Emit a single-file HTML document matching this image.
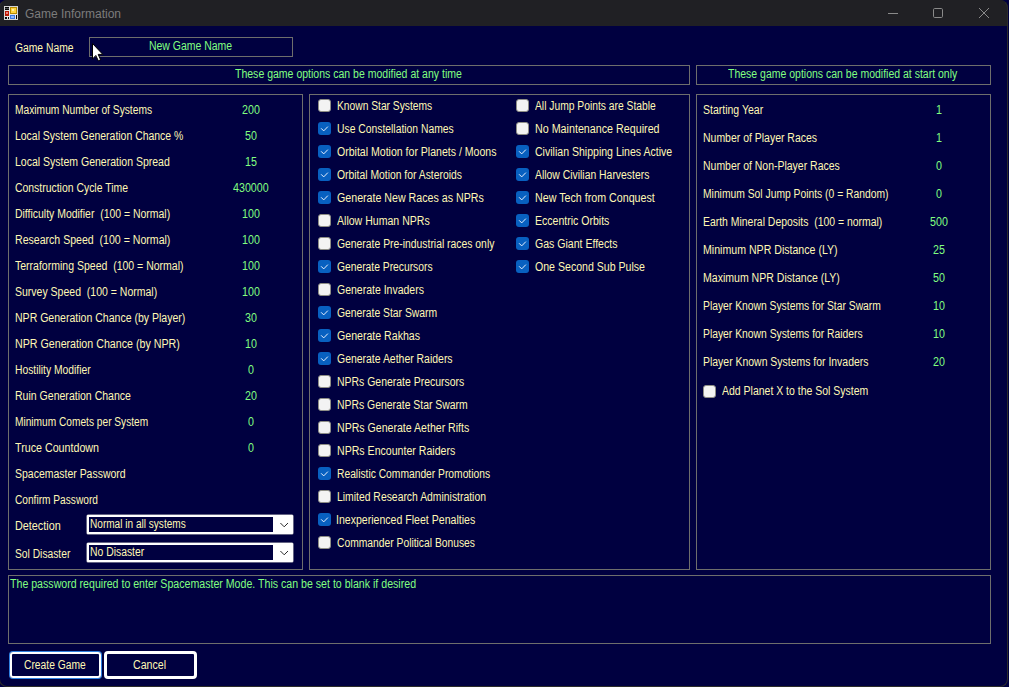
<!DOCTYPE html>
<html><head><meta charset="utf-8"><style>
*{margin:0;padding:0;box-sizing:border-box}
html,body{width:1009px;height:687px;overflow:hidden;background:#000040}
body{position:relative;font-family:"Liberation Sans",sans-serif;font-size:12px}
.t{position:absolute;white-space:pre;line-height:13px;height:13px;transform-origin:0 0}
.w{color:#FFF8B4}
.g{color:#80FF80}
.box{position:absolute;border:1px solid #6E6E6C}
.cb{position:absolute;width:13px;height:13px;border-radius:3px;background:#F3F3F3;border:1px solid #8E8E86}
.cb.on{background:#0860C0;border:none}
.cb svg{position:absolute;left:0;top:0}
#title{position:absolute;left:0;top:0;width:1009px;height:26px;background:#202024}
.combo{position:absolute;background:#fff;border-radius:1px;box-shadow:0 0 0 0.5px #c8c8c8}
.combo .in{position:absolute;left:2px;top:2px;width:184px;height:15px;background:#000040}
.btn{position:absolute;border:3px solid #fff;border-radius:4px}
</style></head><body>
<div id="title">
 <svg style="position:absolute;left:4px;top:6px" width="14" height="14" viewBox="0 0 14 14" shape-rendering="crispEdges">
  <rect x="0" y="0" width="14" height="14" fill="#D4D4D4"/><rect x="1" y="1" width="12" height="12" fill="#E6E6E6"/>
  <rect x="1" y="1" width="4" height="3" fill="#080808"/><rect x="1" y="2" width="4" height="1" fill="#505050"/>
  <rect x="1" y="5" width="4" height="5" fill="#B81800"/><rect x="2" y="6" width="2" height="2" fill="#F08080"/>
  <rect x="6" y="1" width="7" height="7" fill="#B88C00"/><rect x="7" y="2" width="5" height="5" fill="#FFD440"/><rect x="8" y="3" width="2" height="2" fill="#FFF0A0"/>
  <rect x="6" y="9" width="5" height="4" fill="#3C78E0"/><rect x="7" y="10" width="3" height="2" fill="#90B8FF"/>
  <rect x="1" y="11" width="2" height="2" fill="#080808"/><rect x="4" y="11" width="1" height="2" fill="#080808"/>
  <rect x="12" y="9" width="1" height="4" fill="#080808"/>
 </svg>
 <svg style="position:absolute;left:880px;top:0" width="129" height="26" viewBox="0 0 129 26">
  <path d="M8 13.5 H18" stroke="#8a8a8a" stroke-width="1" fill="none"/>
  <rect x="53.5" y="8.5" width="9" height="9" rx="1.2" stroke="#8a8a8a" stroke-width="1" fill="none"/>
  <path d="M99 8 L109 18 M109 8 L99 18" stroke="#8a8a8a" stroke-width="1" fill="none"/>
 </svg>
 <div class="t" style="left:25px;top:8px;color:#7c7c7c">Game Information</div>
</div>
<div class="box" style="left:89px;top:37px;width:204px;height:20px"></div>
<div class="box" style="left:8px;top:65px;width:682px;height:20px"></div>
<div class="box" style="left:696px;top:65px;width:295px;height:20px"></div>
<div class="box" style="left:8px;top:94px;width:295px;height:476px"></div>
<div class="box" style="left:309px;top:94px;width:381px;height:476px"></div>
<div class="box" style="left:696px;top:94px;width:295px;height:476px"></div>
<div class="box" style="left:8px;top:575px;width:983px;height:69px"></div>
<div class="combo" style="left:87px;top:515px;width:206px;height:19px"><div class="in"></div></div>
<div class="combo" style="left:87px;top:543px;width:206px;height:19px"><div class="in"></div></div>
<div class="btn" style="left:10px;top:652px;width:91px;height:26px;border-width:2px;border-radius:3px;box-shadow:0 0 0 1px #2f80e0"></div>
<div class="btn" style="left:104px;top:651px;width:93px;height:28px"></div>
<svg style="position:absolute;left:273px;top:515px" width="20" height="48" viewBox="0 0 20 48">
 <path d="M7.4 8 L11.2 11.8 L15 8" stroke="#2a2a2a" stroke-width="1" fill="none"/>
 <path d="M7.4 36 L11.2 39.8 L15 36" stroke="#2a2a2a" stroke-width="1" fill="none"/>
</svg>
<div class="cb" style="left:318px;top:99px"></div>
<div class="cb on" style="left:318px;top:122px"><svg width="13" height="13" viewBox="0 0 13 13"><path d="M3.4 6.6 L5.7 8.9 L9.6 4.9" fill="none" stroke="#e8f0ff" stroke-width="1" stroke-linecap="round" stroke-linejoin="round"/></svg></div>
<div class="cb on" style="left:318px;top:145px"><svg width="13" height="13" viewBox="0 0 13 13"><path d="M3.4 6.6 L5.7 8.9 L9.6 4.9" fill="none" stroke="#e8f0ff" stroke-width="1" stroke-linecap="round" stroke-linejoin="round"/></svg></div>
<div class="cb on" style="left:318px;top:168px"><svg width="13" height="13" viewBox="0 0 13 13"><path d="M3.4 6.6 L5.7 8.9 L9.6 4.9" fill="none" stroke="#e8f0ff" stroke-width="1" stroke-linecap="round" stroke-linejoin="round"/></svg></div>
<div class="cb on" style="left:318px;top:191px"><svg width="13" height="13" viewBox="0 0 13 13"><path d="M3.4 6.6 L5.7 8.9 L9.6 4.9" fill="none" stroke="#e8f0ff" stroke-width="1" stroke-linecap="round" stroke-linejoin="round"/></svg></div>
<div class="cb" style="left:318px;top:214px"></div>
<div class="cb" style="left:318px;top:237px"></div>
<div class="cb on" style="left:318px;top:260px"><svg width="13" height="13" viewBox="0 0 13 13"><path d="M3.4 6.6 L5.7 8.9 L9.6 4.9" fill="none" stroke="#e8f0ff" stroke-width="1" stroke-linecap="round" stroke-linejoin="round"/></svg></div>
<div class="cb" style="left:318px;top:283px"></div>
<div class="cb on" style="left:318px;top:306px"><svg width="13" height="13" viewBox="0 0 13 13"><path d="M3.4 6.6 L5.7 8.9 L9.6 4.9" fill="none" stroke="#e8f0ff" stroke-width="1" stroke-linecap="round" stroke-linejoin="round"/></svg></div>
<div class="cb on" style="left:318px;top:329px"><svg width="13" height="13" viewBox="0 0 13 13"><path d="M3.4 6.6 L5.7 8.9 L9.6 4.9" fill="none" stroke="#e8f0ff" stroke-width="1" stroke-linecap="round" stroke-linejoin="round"/></svg></div>
<div class="cb on" style="left:318px;top:352px"><svg width="13" height="13" viewBox="0 0 13 13"><path d="M3.4 6.6 L5.7 8.9 L9.6 4.9" fill="none" stroke="#e8f0ff" stroke-width="1" stroke-linecap="round" stroke-linejoin="round"/></svg></div>
<div class="cb" style="left:318px;top:375px"></div>
<div class="cb" style="left:318px;top:398px"></div>
<div class="cb" style="left:318px;top:421px"></div>
<div class="cb" style="left:318px;top:444px"></div>
<div class="cb on" style="left:318px;top:467px"><svg width="13" height="13" viewBox="0 0 13 13"><path d="M3.4 6.6 L5.7 8.9 L9.6 4.9" fill="none" stroke="#e8f0ff" stroke-width="1" stroke-linecap="round" stroke-linejoin="round"/></svg></div>
<div class="cb" style="left:318px;top:490px"></div>
<div class="cb on" style="left:318px;top:513px"><svg width="13" height="13" viewBox="0 0 13 13"><path d="M3.4 6.6 L5.7 8.9 L9.6 4.9" fill="none" stroke="#e8f0ff" stroke-width="1" stroke-linecap="round" stroke-linejoin="round"/></svg></div>
<div class="cb" style="left:318px;top:536px"></div>
<div class="cb" style="left:516px;top:99px"></div>
<div class="cb" style="left:516px;top:122px"></div>
<div class="cb on" style="left:516px;top:145px"><svg width="13" height="13" viewBox="0 0 13 13"><path d="M3.4 6.6 L5.7 8.9 L9.6 4.9" fill="none" stroke="#e8f0ff" stroke-width="1" stroke-linecap="round" stroke-linejoin="round"/></svg></div>
<div class="cb on" style="left:516px;top:168px"><svg width="13" height="13" viewBox="0 0 13 13"><path d="M3.4 6.6 L5.7 8.9 L9.6 4.9" fill="none" stroke="#e8f0ff" stroke-width="1" stroke-linecap="round" stroke-linejoin="round"/></svg></div>
<div class="cb on" style="left:516px;top:191px"><svg width="13" height="13" viewBox="0 0 13 13"><path d="M3.4 6.6 L5.7 8.9 L9.6 4.9" fill="none" stroke="#e8f0ff" stroke-width="1" stroke-linecap="round" stroke-linejoin="round"/></svg></div>
<div class="cb on" style="left:516px;top:214px"><svg width="13" height="13" viewBox="0 0 13 13"><path d="M3.4 6.6 L5.7 8.9 L9.6 4.9" fill="none" stroke="#e8f0ff" stroke-width="1" stroke-linecap="round" stroke-linejoin="round"/></svg></div>
<div class="cb on" style="left:516px;top:237px"><svg width="13" height="13" viewBox="0 0 13 13"><path d="M3.4 6.6 L5.7 8.9 L9.6 4.9" fill="none" stroke="#e8f0ff" stroke-width="1" stroke-linecap="round" stroke-linejoin="round"/></svg></div>
<div class="cb on" style="left:516px;top:260px"><svg width="13" height="13" viewBox="0 0 13 13"><path d="M3.4 6.6 L5.7 8.9 L9.6 4.9" fill="none" stroke="#e8f0ff" stroke-width="1" stroke-linecap="round" stroke-linejoin="round"/></svg></div>
<div class="cb" style="left:703px;top:385px"></div>

<div class="t w" style="left:15.00px;top:104px;transform:scaleX(0.8528)">Maximum Number of Systems</div>
<div class="t g" style="left:242.30px;top:104px;transform:scaleX(0.8900)">200</div>
<div class="t w" style="left:15.00px;top:130px;transform:scaleX(0.8701)">Local System Generation Chance %</div>
<div class="t g" style="left:244.97px;top:130px;transform:scaleX(0.8900)">50</div>
<div class="t w" style="left:15.00px;top:156px;transform:scaleX(0.8756)">Local System Generation Spread</div>
<div class="t g" style="left:245.41px;top:156px;transform:scaleX(0.8900)">15</div>
<div class="t w" style="left:15.00px;top:182px;transform:scaleX(0.8685)">Construction Cycle Time</div>
<div class="t g" style="left:233.40px;top:182px;transform:scaleX(0.8900)">430000</div>
<div class="t w" style="left:15.00px;top:208px;transform:scaleX(0.8708)">Difficulty Modifier  (100 = Normal)</div>
<div class="t g" style="left:242.30px;top:208px;transform:scaleX(0.8900)">100</div>
<div class="t w" style="left:15.00px;top:234px;transform:scaleX(0.8807)">Research Speed  (100 = Normal)</div>
<div class="t g" style="left:242.30px;top:234px;transform:scaleX(0.8900)">100</div>
<div class="t w" style="left:15.00px;top:260px;transform:scaleX(0.8760)">Terraforming Speed  (100 = Normal)</div>
<div class="t g" style="left:242.30px;top:260px;transform:scaleX(0.8900)">100</div>
<div class="t w" style="left:15.00px;top:286px;transform:scaleX(0.8753)">Survey Speed  (100 = Normal)</div>
<div class="t g" style="left:242.30px;top:286px;transform:scaleX(0.8900)">100</div>
<div class="t w" style="left:15.00px;top:312px;transform:scaleX(0.8778)">NPR Generation Chance (by Player)</div>
<div class="t g" style="left:244.97px;top:312px;transform:scaleX(0.8900)">30</div>
<div class="t w" style="left:15.00px;top:338px;transform:scaleX(0.8886)">NPR Generation Chance (by NPR)</div>
<div class="t g" style="left:244.97px;top:338px;transform:scaleX(0.8900)">10</div>
<div class="t w" style="left:15.00px;top:364px;transform:scaleX(0.8591)">Hostility Modifier</div>
<div class="t g" style="left:248.08px;top:364px;transform:scaleX(0.8900)">0</div>
<div class="t w" style="left:15.00px;top:390px;transform:scaleX(0.8780)">Ruin Generation Chance</div>
<div class="t g" style="left:244.97px;top:390px;transform:scaleX(0.8900)">20</div>
<div class="t w" style="left:15.00px;top:416px;transform:scaleX(0.8465)">Minimum Comets per System</div>
<div class="t g" style="left:248.08px;top:416px;transform:scaleX(0.8900)">0</div>
<div class="t w" style="left:15.00px;top:442px;transform:scaleX(0.8915)">Truce Countdown</div>
<div class="t g" style="left:248.08px;top:442px;transform:scaleX(0.8900)">0</div>
<div class="t w" style="left:15.00px;top:468px;transform:scaleX(0.8730)">Spacemaster Password</div>
<div class="t w" style="left:15.00px;top:494px;transform:scaleX(0.8459)">Confirm Password</div>
<div class="t w" style="left:15.00px;top:520px;transform:scaleX(0.9020)">Detection</div>
<div class="t w" style="left:15.00px;top:548px;transform:scaleX(0.8554)">Sol Disaster</div>
<div class="t w" style="left:337.00px;top:100px;transform:scaleX(0.8545)">Known Star Systems</div>
<div class="t w" style="left:337.00px;top:123px;transform:scaleX(0.8618)">Use Constellation Names</div>
<div class="t w" style="left:337.00px;top:146px;transform:scaleX(0.8791)">Orbital Motion for Planets / Moons</div>
<div class="t w" style="left:337.00px;top:169px;transform:scaleX(0.8634)">Orbital Motion for Asteroids</div>
<div class="t w" style="left:337.00px;top:192px;transform:scaleX(0.8873)">Generate New Races as NPRs</div>
<div class="t w" style="left:337.00px;top:215px;transform:scaleX(0.8800)">Allow Human NPRs</div>
<div class="t w" style="left:337.00px;top:238px;transform:scaleX(0.8643)">Generate Pre-industrial races only</div>
<div class="t w" style="left:337.00px;top:261px;transform:scaleX(0.8580)">Generate Precursors</div>
<div class="t w" style="left:337.00px;top:284px;transform:scaleX(0.8740)">Generate Invaders</div>
<div class="t w" style="left:337.00px;top:307px;transform:scaleX(0.8629)">Generate Star Swarm</div>
<div class="t w" style="left:337.00px;top:330px;transform:scaleX(0.8830)">Generate Rakhas</div>
<div class="t w" style="left:337.00px;top:353px;transform:scaleX(0.8707)">Generate Aether Raiders</div>
<div class="t w" style="left:337.00px;top:376px;transform:scaleX(0.8712)">NPRs Generate Precursors</div>
<div class="t w" style="left:337.00px;top:399px;transform:scaleX(0.8669)">NPRs Generate Star Swarm</div>
<div class="t w" style="left:337.00px;top:422px;transform:scaleX(0.8813)">NPRs Generate Aether Rifts</div>
<div class="t w" style="left:337.00px;top:445px;transform:scaleX(0.8821)">NPRs Encounter Raiders</div>
<div class="t w" style="left:337.00px;top:468px;transform:scaleX(0.8564)">Realistic Commander Promotions</div>
<div class="t w" style="left:337.00px;top:491px;transform:scaleX(0.8657)">Limited Research Administration</div>
<div class="t w" style="left:336.12px;top:514px;transform:scaleX(0.8803)">Inexperienced Fleet Penalties</div>
<div class="t w" style="left:337.00px;top:537px;transform:scaleX(0.8584)">Commander Political Bonuses</div>
<div class="t w" style="left:534.70px;top:100px;transform:scaleX(0.8582)">All Jump Points are Stable</div>
<div class="t w" style="left:534.70px;top:123px;transform:scaleX(0.8935)">No Maintenance Required</div>
<div class="t w" style="left:534.70px;top:146px;transform:scaleX(0.8788)">Civilian Shipping Lines Active</div>
<div class="t w" style="left:534.70px;top:169px;transform:scaleX(0.8659)">Allow Civilian Harvesters</div>
<div class="t w" style="left:534.70px;top:192px;transform:scaleX(0.8904)">New Tech from Conquest</div>
<div class="t w" style="left:534.70px;top:215px;transform:scaleX(0.8776)">Eccentric Orbits</div>
<div class="t w" style="left:534.70px;top:238px;transform:scaleX(0.8787)">Gas Giant Effects</div>
<div class="t w" style="left:534.70px;top:261px;transform:scaleX(0.8816)">One Second Sub Pulse</div>
<div class="t w" style="left:703.20px;top:104px;transform:scaleX(0.8754)">Starting Year</div>
<div class="t g" style="left:936.09px;top:104px;transform:scaleX(0.8900)">1</div>
<div class="t w" style="left:703.20px;top:132px;transform:scaleX(0.8725)">Number of Player Races</div>
<div class="t g" style="left:936.09px;top:132px;transform:scaleX(0.8900)">1</div>
<div class="t w" style="left:703.20px;top:160px;transform:scaleX(0.8726)">Number of Non-Player Races</div>
<div class="t g" style="left:936.09px;top:160px;transform:scaleX(0.8900)">0</div>
<div class="t w" style="left:703.20px;top:188px;transform:scaleX(0.8597)">Minimum Sol Jump Points (0 = Random)</div>
<div class="t g" style="left:936.09px;top:188px;transform:scaleX(0.8900)">0</div>
<div class="t w" style="left:703.20px;top:216px;transform:scaleX(0.8684)">Earth Mineral Deposits  (100 = normal)</div>
<div class="t g" style="left:930.30px;top:216px;transform:scaleX(0.8900)">500</div>
<div class="t w" style="left:703.20px;top:244px;transform:scaleX(0.8829)">Minimum NPR Distance (LY)</div>
<div class="t g" style="left:933.42px;top:244px;transform:scaleX(0.8900)">25</div>
<div class="t w" style="left:703.20px;top:272px;transform:scaleX(0.8782)">Maximum NPR Distance (LY)</div>
<div class="t g" style="left:932.97px;top:272px;transform:scaleX(0.8900)">50</div>
<div class="t w" style="left:703.20px;top:300px;transform:scaleX(0.8604)">Player Known Systems for Star Swarm</div>
<div class="t g" style="left:932.97px;top:300px;transform:scaleX(0.8900)">10</div>
<div class="t w" style="left:703.20px;top:328px;transform:scaleX(0.8613)">Player Known Systems for Raiders</div>
<div class="t g" style="left:932.97px;top:328px;transform:scaleX(0.8900)">10</div>
<div class="t w" style="left:703.20px;top:356px;transform:scaleX(0.8705)">Player Known Systems for Invaders</div>
<div class="t g" style="left:932.97px;top:356px;transform:scaleX(0.8900)">20</div>
<div class="t w" style="left:722.10px;top:385px;transform:scaleX(0.8737)">Add Planet X to the Sol System</div>
<div class="t w" style="left:14.70px;top:42px;transform:scaleX(0.8603)">Game Name</div>
<div class="t g" style="left:149.20px;top:40px;transform:scaleX(0.8716)">New Game Name</div>
<div class="t g" style="left:235.00px;top:68px;transform:scaleX(0.8764)">These game options can be modified at any time</div>
<div class="t g" style="left:728.10px;top:68px;transform:scaleX(0.8745)">These game options can be modified at start only</div>
<div class="t g" style="left:10.10px;top:578px;transform:scaleX(0.8839)">The password required to enter Spacemaster Mode. This can be set to blank if desired</div>
<div class="t w" style="left:89.50px;top:518px;transform:scaleX(0.8395)">Normal in all systems</div>
<div class="t w" style="left:89.50px;top:546px;transform:scaleX(0.8651)">No Disaster</div>
<div class="t w" style="left:23.50px;top:659px;transform:scaleX(0.8569)">Create Game</div>
<div class="t w" style="left:132.50px;top:659px;transform:scaleX(0.8838)">Cancel</div>

<svg style="position:absolute;left:91px;top:42px" width="14" height="22" viewBox="0 0 14 22">
 <path d="M1.5 1.5 L1.5 17 L4.8 13.5 L7.3 18.8 L9.6 17.8 L7.2 12.4 L11.8 12.4 Z" fill="#fff" stroke="#000" stroke-width="1" stroke-linejoin="miter"/>
</svg>
<div style="position:absolute;left:-1px;top:0;width:1009px;height:687px;border:1px solid #2c2c2a;border-top-color:#202024;border-radius:8px;box-shadow:0 0 0 40px #000040"></div>
</body></html>
